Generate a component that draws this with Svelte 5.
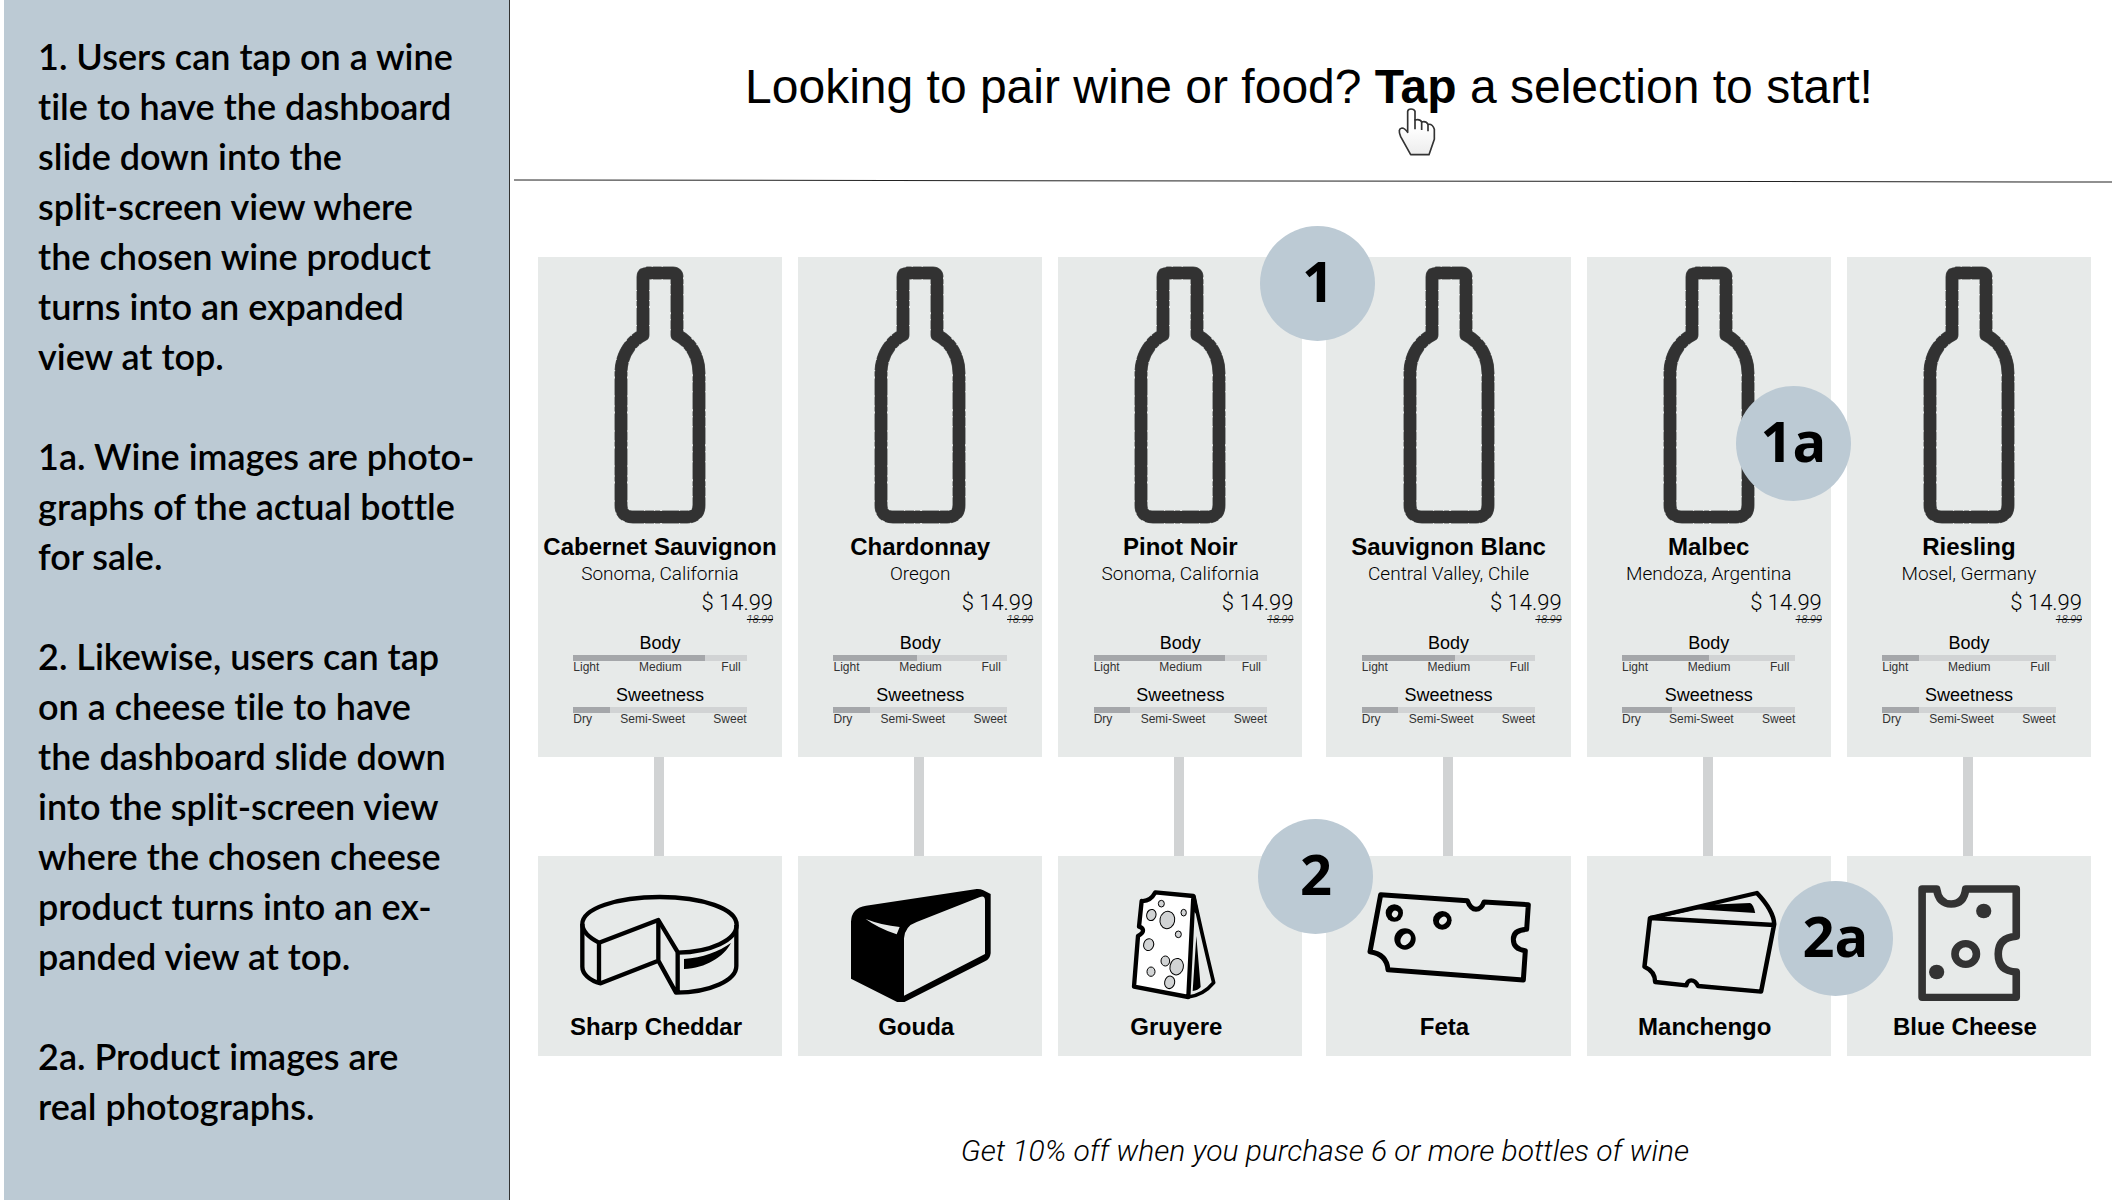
<script>
  const notes = [
    ['1. Users can tap on a wine', 'tile to have the dashboard', 'slide down into the', 'split-screen view where', 'the chosen wine product', 'turns into an expanded', 'view at top.'],
    ['1a. Wine images are photo-', 'graphs of the actual bottle', 'for sale.'],
    ['2. Likewise, users can tap', 'on a cheese tile to have', 'the dashboard slide down', 'into the split-screen view', 'where the chosen cheese', 'product turns into an ex-', 'panded view at top.'],
    ['2a. Product images are', 'real photographs.']
  ];

  const groups = [
    [
      { wine: 'Cabernet Sauvignon', region: 'Sonoma, California', body: 76, sweet: 21, cheese: 'Sharp Cheddar', art: 'cheddar', box: '27 48 732 438' },
      { wine: 'Chardonnay', region: 'Oregon', body: 48, sweet: 21, cheese: 'Gouda', art: 'gouda', box: '24 48 732 438' },
      { wine: 'Pinot Noir', region: 'Sonoma, California', body: 76, sweet: 21, cheese: 'Gruyere', art: 'gruyere', box: '28 48 732 438', wineMark: '1', cheeseMark: '2' }
    ],
    [
      { wine: 'Sauvignon Blanc', region: 'Central Valley, Chile', body: 54, sweet: 21, cheese: 'Feta', art: 'feta', box: '51 48 732 438' },
      { wine: 'Malbec', region: 'Mendoza, Argentina', body: 50, sweet: 29, cheese: 'Manchengo', art: 'manchengo', box: '49 48 705 438', wineMark: '1a', cheeseMark: '2a' },
      { wine: 'Riesling', region: 'Mosel, Germany', body: 21, sweet: 21, cheese: 'Blue Cheese', art: 'blue', box: '801 48 705 438' }
    ]
  ];

  const bottle = 'M29 70V12Q29 8 33 8H59Q63 8 63 12V70C77 77 85 92 85 108V240Q85 252 73 252H19Q7 252 7 240V108C7 92 15 77 29 70Z';
</script>

{#snippet gauge(title, value, labels, kind)}
  <span class="gauge-title">{title}</span>
  <span class="track" role="meter" aria-label={title} aria-valuenow={value} aria-valuemin="0" aria-valuemax="100">
    <span class="fill" style="width: {value}%"></span>
  </span>
  <span class="scale {kind}">
    {#each labels as label}<span>{label}</span>{/each}
  </span>
{/snippet}

<div class="page">
  <aside>
    {#each notes as note}
      <p>{#each note as line}<span class="line">{line}</span>{/each}</p>
    {/each}
  </aside>

  <main>
    <header>
      <h1>Looking to pair wine or food? <strong class="tap">Tap<svg class="hand" viewBox="0 0 114 144" aria-hidden="true">
        <defs><linearGradient id="palm" x1="0" y1="0" x2="0" y2="1"><stop offset="0.4" stop-color="#fff" /><stop offset="1" stop-color="#ececec" /></linearGradient></defs>
        <path d="M38 140L8 86Q-2 62 12 60Q20 60 29 73V10Q30 3 39 3Q49 3 51 10V36Q66 32 71 42Q84 38 90 49Q104 47 109 64V94L93 140Z" fill="url(#palm)" stroke="#333" stroke-width="5" stroke-linejoin="round" />
        <path d="M51 34V64M71 42V66M90 49V70" fill="none" stroke="#333" stroke-width="5" />
      </svg></strong> a selection to start!</h1>
      <svg class="rule" viewBox="0 0 1598 4" preserveAspectRatio="none" aria-hidden="true"><path d="M0 1L1598 3" stroke="#222" stroke-width="1" /></svg>
    </header>

    <div class="board">
      {#each groups as group}
        <div class="group">
          {#each group as item}
            <section class="pair">
              <div class="slot">
                <button type="button" class="tile wine">
                  <svg class="bottle" viewBox="0 0 92 260" aria-hidden="true">
                    <path class="edge" d={bottle} />
                    <path class="core" d={bottle} />
                  </svg>
                  <span class="name">{item.wine}</span>
                  <span class="region">{item.region}</span>
                  <span class="price">$ 14.99</span>
                  <s class="old">18.99</s>
                  {@render gauge('Body', item.body, ['Light', 'Medium', 'Full'], 'body')}
                  {@render gauge('Sweetness', item.sweet, ['Dry', 'Semi-Sweet', 'Sweet'], 'sweet')}
                </button>
                {#if item.wineMark}<span class="mark w{item.wineMark}">{item.wineMark}</span>{/if}
              </div>
              <div class="link"></div>
              <div class="slot">
                <button type="button" class="tile cheese">
                  <svg class="art" viewBox={item.box} preserveAspectRatio="none" aria-hidden="true">
                    {#if item.art === 'cheddar'}
                      <g fill="none" stroke="#000" stroke-width="13" stroke-linejoin="round">
                        <path d="M210 308C175 290 160 272 160 252C160 206 263 171 392 171C520 171 623 206 623 255C623 300 545 336 447 338L388 240Z" />
                        <path d="M160 252V380C160 400 180 422 215 430L388 362L441 458C545 458 622 420 622 378V255M210 308V430M388 240V362M446 338V458" />
                      </g>
                      <path d="M465 357C520 353 570 335 606 309C585 350 530 385 465 387Z" />
                    {:else if item.art === 'gouda'}
                      <path d="M183 245Q185 203 228 197L560 147Q570 146 580 151L602 162V340Q600 358 585 364L345 485Q332 490 320 485L183 416Z" />
                      <path class="paper" d="M342 467V295Q345 258 380 246L570 171Q585 166 585 182V342ZM227 237Q275 256 329 261L320 283Q265 265 227 237Z" />
                    {:else if item.art === 'gruyere'}
                      <path d="M320 157L434 168L419 471L256 440L268 288Q284 280 283 271Q282 263 271 260L279 183Q305 185 320 157Z" fill="#fff" stroke="#000" stroke-width="13" stroke-linejoin="round" />
                      <path d="M436 170Q455 262 495 428Q465 465 419 471" fill="none" stroke="#000" stroke-width="11" stroke-linejoin="round" />
                      <path d="M430 165L440 165L452 230L436 215ZM443 288L432 453Q448 452 456 441Z" />
                      <g fill="#d1d3d4" stroke="#000" stroke-width="3">
                        <ellipse cx="338" cy="191" rx="9" ry="10" /><ellipse cx="308" cy="225" rx="14" ry="17" transform="rotate(15 308 225)" />
                        <ellipse cx="356" cy="240" rx="22" ry="26" transform="rotate(12 356 240)" /><ellipse cx="405" cy="218" rx="8" ry="10" />
                        <ellipse cx="389" cy="283" rx="9" ry="10" /><ellipse cx="300" cy="314" rx="15" ry="18" transform="rotate(15 300 314)" />
                        <ellipse cx="350" cy="363" rx="13" ry="15" /><ellipse cx="384" cy="380" rx="20" ry="25" transform="rotate(12 384 380)" />
                        <ellipse cx="307" cy="395" rx="12" ry="14" /><ellipse cx="363" cy="427" rx="15" ry="19" transform="rotate(12 363 427)" />
                      </g>
                    {:else if item.art === 'feta'}
                      <path d="M212 164L472 182Q482 208 498 208Q514 208 522 186L655 194L650 268Q610 270 610 298Q610 328 646 332L640 420L234 389Q230 342 180 335Z" fill="none" stroke="#000" stroke-width="15" stroke-linejoin="round" />
                      <circle cx="253" cy="219" r="26" /><circle cx="397" cy="241" r="28" /><circle cx="285" cy="297" r="32" />
                      <g class="paper">
                        <ellipse cx="255" cy="222" rx="9" ry="10" transform="rotate(30 255 222)" />
                        <ellipse cx="399" cy="242" rx="10" ry="13" transform="rotate(45 399 242)" />
                        <ellipse cx="287" cy="298" rx="14" ry="19" transform="rotate(35 287 298)" />
                      </g>
                    {:else if item.art === 'manchengo'}
                      <path d="M231 234L540 159Q588 212 590 252L552 455L370 438Q362 421 350 421Q340 421 336 436L246 426Q246 394 215 380ZM231 234L590 255" fill="none" stroke="#000" stroke-width="13" stroke-linejoin="round" />
                      <path d="M236 228L400 190L425 196L280 229Z" />
                      <path d="M352 207L400 194L520 189Q530 192 535 219Z" />
                    {:else}
                      <path d="M1018 147H1060Q1066 192 1102 192Q1139 192 1144 147H1290V289Q1238 292 1238 342Q1238 393 1290 396V472H1018Z" fill="none" stroke="#333" stroke-width="22" stroke-linejoin="round" />
                      <circle cx="1196" cy="213" r="22" fill="#333" /><circle cx="1060" cy="396" r="22" fill="#333" />
                      <circle cx="1144" cy="342" r="31" fill="none" stroke="#333" stroke-width="22" />
                    {/if}
                  </svg>
                  <span class="name">{item.cheese}</span>
                </button>
                {#if item.cheeseMark}<span class="mark c{item.cheeseMark}">{item.cheeseMark}</span>{/if}
              </div>
            </section>
          {/each}
        </div>
      {/each}
    </div>

    <footer>Get 10% off when you purchase 6 or more bottles of wine</footer>
  </main>
</div>

<style>
  :global(body) { margin: 0; background: #fff; }
  .page {
    display: flex;
    min-height: 100vh;
    padding-left: 4px;
    box-sizing: border-box;
    color: #000;
    font-family: "Liberation Sans", Arial, sans-serif;
  }
  aside {
    flex: none;
    width: 24%;
    padding: 31px 0 0 34px;
    box-sizing: border-box;
    background: #bccad4;
    border-right: 1px solid #333;
    font: 600 36px/50px Lato, sans-serif;
    font-variant-ligatures: none;
    white-space: nowrap;
  }
  aside p { margin: 0 0 50px; }
  .line { display: block; }
  main { flex: 1; min-width: 0; display: flex; flex-direction: column; }
  header { display: flex; flex-direction: column; padding-left: 4px; }
  h1 {
    margin: 0;
    padding: 57px 8px 62px 0;
    font-size: 48px;
    line-height: 60px;
    font-weight: 400;
    text-align: center;
  }
  .tap { position: relative; }
  .hand { position: absolute; left: 23px; top: 48px; width: 38px; height: 48px; }
  .rule { width: 100%; height: 4px; display: block; }
  .board { display: flex; gap: 24px; padding: 74px 21px 0 28px; }
  .group { flex: 1; display: grid; grid-template-columns: repeat(3, minmax(0, 1fr)); gap: 16px; }
  .pair { display: flex; flex-direction: column; }
  .slot { position: relative; display: flex; }
  .tile {
    flex: 1;
    min-width: 0;
    display: flex;
    flex-direction: column;
    align-items: center;
    margin: 0;
    border: 0;
    background: #e7eae9;
    color: inherit;
    font-family: inherit;
    cursor: pointer;
    white-space: nowrap;
  }
  .wine { padding: 8px 0 28px; }
  .bottle { width: 92px; height: 260px; }
  .bottle path { fill: none; stroke-linejoin: round; }
  .edge { stroke: #505252; stroke-width: 13; stroke-dasharray: 9 1 17 2 5 1; }
  .core { stroke: #323232; stroke-width: 12; }
  .name { font-size: 24px; line-height: 28px; font-weight: 700; }
  .wine .name { margin-top: 8px; }
  .region { font: 300 19px/26px Roboto, sans-serif; }
  .price { align-self: flex-end; margin-top: 4px; padding-right: 9px; font: 300 22px/24px Roboto, sans-serif; }
  .old { align-self: flex-end; padding-right: 9px; font: italic 300 11px/10px Roboto, sans-serif; }
  .gauge-title { font-size: 18px; line-height: 24px; margin-top: 6px; }
  .track { display: block; width: 71%; height: 6px; background: #d1d3d4; }
  .fill { display: block; height: 6px; background: #a5a7aa; }
  .scale {
    display: flex;
    justify-content: space-between;
    width: 71%;
    box-sizing: border-box;
    margin-bottom: 4px;
    font-size: 12px;
    line-height: 12px;
    color: #333;
  }
  .scale.body { padding-right: 6px; }
  .link { width: 10px; height: 99px; margin-left: calc(50% - 6px); background: #d1d3d4; }
  .cheese { padding: 0 0 15px; }
  .art { width: 244px; height: 146px; }
  .cheese .name { margin-top: 11px; padding-right: 8px; }
  .paper { fill: #e7eae9; }
  .mark {
    position: absolute;
    z-index: 1;
    display: grid;
    place-items: center;
    width: 115px;
    height: 115px;
    padding-bottom: 8px;
    box-sizing: border-box;
    border-radius: 50%;
    background: #bccad4;
    font: 700 56px/56px "Open Sans", sans-serif;
  }
  .w1 { right: -73px; top: -31px; }
  .w1a { right: -20px; top: 129px; }
  .c2 { right: -71px; top: -37px; }
  .c2a { right: -62px; top: 25px; }
  footer {
    padding: 77px 0 0 28px;
    text-align: center;
    font: italic 300 30px/36px Roboto, sans-serif;
  }
</style>
